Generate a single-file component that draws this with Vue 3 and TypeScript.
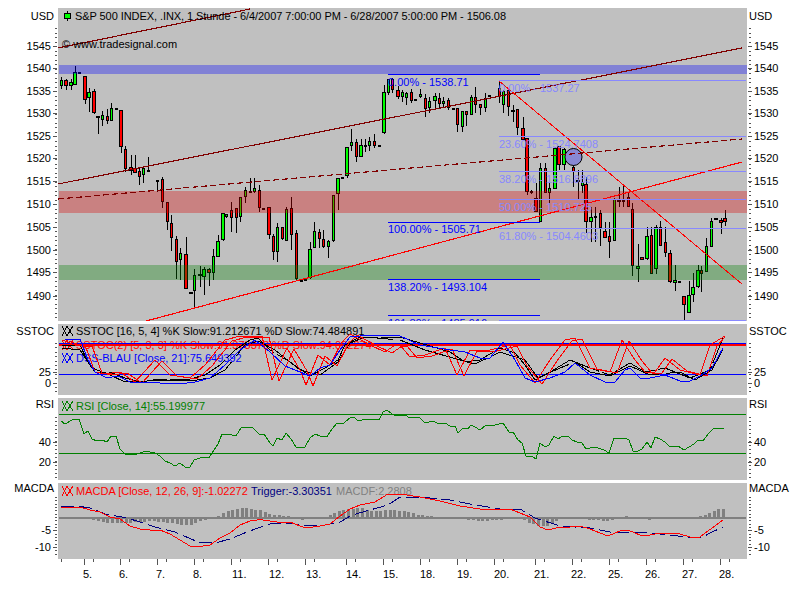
<script setup lang="ts">
// pixel data for the S&P chart, all values are y/x in page px
type Candle = [number, number, number, number, number, string];
type Pt = [number, number];

const candles: Candle[] = [
  [61, 77, 89, 80, 86, 'g'], [65.5, 79, 90, 80, 86, 'r'], [70.5, 79, 90, 82, 86, 'g'], [74.5, 66, 85, 72, 85, 'g'],
  [79, 72, 73, 72, 73, 'd'], [84.5, 76, 104, 76, 100, 'r'], [88.5, 88, 112, 92, 98, 'g'], [93.5, 89, 114, 91, 113, 'r'],
  [97.5, 116, 134, 116, 117, 'd'], [102, 111, 126, 115, 120, 'g'], [107, 109, 124, 116, 121, 'r'], [111, 103, 121, 108, 121, 'g'],
  [116, 108, 109, 108, 109, 'd'], [120.5, 110, 153, 110, 147, 'r'], [125, 146, 172, 149, 169, 'r'], [130.5, 155, 175, 167, 171, 'r'],
  [134.5, 155, 173, 168, 173, 'r'], [139, 168, 185, 171, 177, 'r'], [143, 168, 183, 168, 175, 'g'], [148, 157, 171, 170, 171, 'd'],
  [157, 180, 192, 180, 181, 'd'], [162, 177, 208, 179, 202, 'r'], [167, 202, 230, 202, 222, 'r'], [171, 215, 251, 223, 238, 'r'],
  [176, 236, 279, 239, 262, 'r'], [180, 248, 280, 253, 260, 'g'], [185.5, 237, 289, 254, 289, 'r'], [190.5, 292, 293, 292, 293, 'd'],
  [194, 269, 307, 275, 291, 'g'], [199.5, 266, 287, 274, 275, 'd'], [203.5, 267, 295, 269, 277, 'g'], [208.5, 268, 286, 269, 273, 'r'],
  [213, 249, 280, 256, 273, 'g'], [217.5, 235, 257, 241, 257, 'g'], [222.5, 213, 241, 213, 240, 'g'], [226, 214, 218, 214, 217, 'g'],
  [231, 202, 232, 210, 218, 'r'], [236, 208, 233, 208, 218, 'r'], [240, 197, 222, 197, 217, 'g'], [245, 187, 203, 190, 197, 'g'],
  [250, 178, 193, 191, 193, 'r'], [254, 178, 193, 188, 192, 'g'], [259, 185, 212, 190, 208, 'r'], [263, 208, 209, 208, 209, 'd'],
  [268.5, 207, 239, 207, 235, 'r'], [273, 234, 260, 236, 252, 'r'], [277, 223, 262, 227, 252, 'g'], [282, 227, 240, 227, 239, 'r'],
  [286, 207, 241, 209, 241, 'g'], [291, 197, 250, 208, 235, 'r'], [296, 230, 280, 233, 279, 'r'], [301, 280, 281, 280, 281, 'd'],
  [305, 279, 280, 279, 280, 'd'], [309.5, 242, 279, 249, 278, 'g'], [314, 222, 248, 231, 248, 'g'], [319, 229, 248, 232, 239, 'r'],
  [323, 230, 248, 239, 247, 'r'], [328, 240, 258, 241, 247, 'g'], [333, 195, 242, 195, 241, 'g'], [337.5, 178, 210, 178, 194, 'g'],
  [342, 177, 178, 177, 178, 'd'], [346.5, 147, 178, 147, 176, 'g'], [351, 129, 151, 142, 146, 'g'], [356, 139, 162, 142, 157, 'r'],
  [360.5, 139, 157, 145, 157, 'g'], [365, 139, 152, 145, 146, 'd'], [369, 137, 151, 141, 146, 'g'], [374, 134, 148, 141, 146, 'r'],
  [379, 145, 146, 145, 146, 'd'], [383.5, 85, 134, 92, 133, 'g'], [388, 79, 95, 79, 93, 'g'], [392, 78, 93, 79, 90, 'r'],
  [397.5, 86, 99, 90, 97, 'r'], [402, 90, 102, 92, 97, 'g'], [406, 92, 105, 93, 98, 'g'], [411, 89, 103, 92, 101, 'r'],
  [415, 99, 100, 99, 100, 'd'], [420, 89, 98, 94, 97, 'g'], [425, 94, 117, 98, 109, 'r'], [429, 97, 113, 101, 108, 'g'],
  [434.5, 93, 108, 96, 101, 'g'], [439, 93, 108, 98, 104, 'r'], [443, 97, 108, 101, 104, 'g'], [448, 98, 110, 100, 108, 'r'],
  [453, 108, 109, 108, 109, 'd'], [457, 108, 132, 108, 125, 'r'], [462, 111, 132, 111, 127, 'g'], [466, 111, 126, 111, 115, 'r'],
  [471, 95, 115, 97, 115, 'g'], [475, 87, 113, 97, 105, 'r'], [480, 104, 115, 104, 108, 'r'], [485, 93, 112, 98, 108, 'g'],
  [489, 95, 97, 95, 97, 'g'], [499, 81, 103, 88, 97, 'r'], [503, 90, 113, 91, 105, 'g'], [508, 90, 116, 90, 107, 'r'],
  [512.5, 105, 122, 110, 111, 'd'], [517, 109, 135, 109, 128, 'r'], [522.5, 117, 137, 128, 140, 'r'], [526.5, 138, 195, 138, 192, 'r'],
  [531, 190, 194, 191, 193, 'r'], [535.5, 183, 212, 198, 212, 'r'], [540, 163, 222, 168, 222, 'g'], [545, 163, 193, 168, 193, 'r'],
  [549, 182, 203, 188, 193, 'g'], [554.5, 147, 189, 148, 189, 'g'], [558.5, 146, 170, 146, 165, 'r'], [563.5, 148, 170, 149, 165, 'g'],
  [573, 160, 187, 167, 172, 'r'], [577.5, 170, 199, 180, 181, 'd'], [582, 170, 193, 182, 186, 'g'], [585.5, 177, 233, 184, 222, 'r'],
  [590.5, 207, 242, 217, 222, 'g'], [595, 207, 242, 216, 218, 'g'], [600, 210, 246, 213, 228, 'r'], [604.5, 222, 238, 231, 238, 'r'],
  [609, 222, 258, 236, 242, 'r'], [614, 198, 241, 199, 241, 'g'], [618.5, 187, 207, 200, 201, 'd'], [623, 185, 207, 200, 201, 'd'],
  [628, 192, 207, 197, 207, 'r'], [632, 203, 276, 209, 266, 'r'], [637.5, 244, 282, 266, 269, 'g'], [641.5, 257, 260, 257, 260, 'r'],
  [646.5, 227, 260, 236, 259, 'g'], [651, 227, 274, 235, 274, 'r'], [655.5, 225, 274, 227, 269, 'g'], [660, 221, 246, 227, 246, 'r'],
  [665, 227, 257, 242, 253, 'r'], [669.5, 250, 283, 253, 282, 'r'], [674.5, 265, 291, 280, 283, 'g'], [679, 281, 282, 281, 282, 'd'],
  [683.5, 296, 320, 296, 305, 'r'], [688.5, 281, 313, 295, 313, 'g'], [692.5, 273, 302, 287, 295, 'g'], [697.5, 265, 288, 270, 287, 'g'],
  [701, 266, 292, 270, 274, 'r'], [706, 238, 272, 246, 272, 'g'], [711, 218, 247, 221, 247, 'g'], [715.5, 218, 220, 218, 220, 'r'],
  [720.5, 218, 234, 220, 223, 'r'], [724.5, 210, 226, 218, 222, 'r'],
];

const candleFill = (c: string) => (c === 'g' ? '#00ff00' : c === 'r' ? '#ff0000' : '#000080');
// bars that fall between two pixel columns come out one px wider
const bodyWidth = (x: number) => (x % 1 ? 3 : 2);

const toPoints = (pts: Pt[]) => pts.map((p) => p.join(',')).join(' ');

// the second %K line trails the first one by a bit
const lag = (pts: Pt[], dx: number, dy: number): Pt[] => pts.map(([x, y]) => [Math.min(x + dx, 725), y + dy]);

const rsi: Pt[] = [
  [61, 421], [65, 424], [72, 420], [79, 419], [84, 434], [88, 431], [92, 439], [97, 441], [102, 440], [107, 442], [111, 436], [116, 436],
  [120, 449], [125, 454], [130, 454], [135, 454.5], [140, 453], [145, 451.5], [150, 452], [155, 453], [160, 456], [165, 461], [170, 463],
  [175, 466], [180, 463], [185, 467], [190, 467], [194, 460], [200, 458], [205, 457.5], [209, 458], [212, 453], [218, 444], [222, 434],
  [228, 434], [232, 435], [236, 436], [241, 428], [246, 427], [253, 428], [259, 434], [264, 434], [270, 443], [273, 446], [277, 438],
  [282, 440], [286, 433], [291, 439], [296, 447], [305, 447], [310, 438], [315, 434], [320, 436], [327, 436.5], [332, 429], [337, 423],
  [344, 423], [351, 417], [355, 418], [358, 421], [362, 420], [370, 419.5], [379, 420], [383, 412], [387, 410], [392, 414], [396, 416],
  [405, 415], [410, 418], [419, 417], [425, 423], [433, 421], [439, 424], [445, 423], [450, 426], [455, 426], [458, 433], [463, 428],
  [468, 429], [471, 425], [475, 427], [480, 430], [486, 425], [495, 425], [503, 423], [509, 432], [513, 432], [518, 440], [522, 443],
  [526, 456], [532, 456], [536, 459], [540, 443], [545, 447], [549, 445], [554, 436], [558, 439], [563, 436], [568, 436], [572, 440],
  [577, 442], [582, 443], [586, 449], [595, 447], [604, 450], [609, 453], [614, 438], [620, 439], [625, 438], [629, 440], [633, 451],
  [638, 451], [642, 449], [647, 442], [651, 448], [655, 437], [660, 439], [665, 442], [669, 446], [678, 446], [684, 450], [689, 447],
  [694, 444], [698, 440], [703, 441], [708, 434], [713, 429], [718, 428], [724, 429],
];

const macd: Pt[] = [
  [61, 507], [80, 507], [90, 510], [100, 512], [110, 517], [120, 519], [130, 526], [140, 529], [150, 530], [160, 530], [170, 534],
  [180, 540], [190, 546], [200, 546.5], [210, 545], [220, 538], [230, 533], [240, 525], [250, 521], [260, 519.5], [270, 521], [280, 522.5],
  [290, 522], [300, 526], [306, 528], [320, 526], [330, 524], [340, 516], [350, 509], [360, 505], [375, 502], [388, 494], [400, 494],
  [420, 497], [440, 501], [460, 506], [480, 509], [510, 509], [520, 513], [530, 517], [540, 527], [548, 530], [560, 527], [570, 527],
  [580, 526], [590, 529], [600, 533], [608, 536], [620, 531], [628, 530], [640, 535], [650, 535], [660, 533], [680, 534], [690, 537],
  [700, 537], [705, 533], [715, 526], [723, 520],
];

const trigger: Pt[] = [
  [61, 506], [77, 506], [90, 508], [105, 514], [127, 518], [140, 522], [155, 527], [175, 532], [198, 542], [215, 543], [230, 539],
  [247, 532], [258, 528], [270, 524], [290, 523], [300, 525], [320, 526], [340, 522], [352, 515], [370, 510], [388, 505], [400, 497],
  [420, 497], [450, 500], [470, 504], [500, 509], [520, 509], [535, 518], [560, 526], [575, 527], [590, 528], [610, 532], [640, 532],
  [670, 535], [686, 537], [703, 537], [710, 533], [723, 527],
];

// histogram outline, bars are sampled from it every 4.63px
const histKeys: Pt[] = [
  [61, -1], [85, -1], [95, -3], [107, -5.6], [123, -6], [140, -5], [150, -4], [170, -6], [180, -8], [190, -8], [200, -4], [213, -1],
  [220, 2], [227, 6], [245, 9], [263, 6], [272, 2], [290, 1], [300, -3], [310, -2], [320, -1], [327, 1], [337, 5], [347, 8], [360, 9],
  [373, 6], [390, 7], [405, 6], [418, 2], [430, 1], [450, -1], [460, -2], [480, -4], [500, -3], [520, -1], [523, -3], [530, -6],
  [540, -10], [550, -8], [560, -2], [580, -1], [590, -3], [610, -4], [620, -1], [625, 1], [640, -1], [650, -3], [660, -1], [670, -2],
  [690, -1], [700, 1], [708, 3], [712, 5], [717, 8], [725, 8],
];

const histAt = (x: number) => {
  for (let i = 1; i < histKeys.length; i++) {
    const [x0, v0] = histKeys[i - 1];
    const [x1, v1] = histKeys[i];
    if (x <= x1) return v0 + ((v1 - v0) * (x - x0)) / (x1 - x0);
  }
  return 0;
};

const histBars = Array.from({ length: 144 }, (_, i) => {
  const x = Math.round(61 + i * 4.63);
  const v = Math.round(histAt(x));
  return { x, y: v > 0 ? 517 - v : 517, h: Math.max(Math.abs(v), 1) };
});

const red1: Pt[] = [
  [62, 340], [75, 345], [85, 345], [95, 372], [105, 374], [120, 372], [135, 382], [155, 360], [170, 375], [190, 378], [205, 365], [225, 340],
  [240, 336], [262, 336], [272, 380], [287, 348], [300, 370], [306, 385], [318, 355], [330, 365], [342, 342], [350, 334], [370, 345],
  [385, 352], [395, 345], [400, 345], [410, 357], [425, 355], [445, 348], [457, 375], [470, 350], [490, 350], [510, 345], [520, 365],
  [535, 383], [550, 360], [565, 340], [575, 338], [590, 368], [610, 372], [622, 340], [635, 360], [645, 372], [655, 372], [665, 358],
  [680, 370], [700, 375], [710, 345], [725, 336],
];

const black1: Pt[] = [
  [62, 345], [80, 345], [88, 362], [95, 372], [110, 372], [125, 378], [140, 382], [160, 379], [190, 379], [205, 375], [220, 365], [235, 350],
  [250, 340], [258, 338], [270, 350], [290, 362], [310, 376], [325, 368], [338, 360], [345, 345], [360, 337], [400, 337], [420, 343],
  [450, 352], [465, 362], [480, 360], [500, 348], [515, 353], [525, 365], [535, 380], [550, 372], [570, 360], [590, 368], [610, 375],
  [630, 363], [645, 372], [665, 368], [690, 378], [710, 370], [723, 338],
];

const black2: Pt[] = [
  [62, 348], [80, 350], [92, 368], [110, 375], [125, 382], [145, 380], [190, 381], [210, 378], [225, 370], [245, 345], [258, 341], [275, 350],
  [300, 370], [320, 375], [338, 362], [350, 343], [365, 337], [400, 340], [425, 350], [460, 360], [475, 364], [500, 352], [525, 360],
  [538, 378], [560, 368], [575, 362], [590, 372], [610, 376], [630, 366], [650, 375], [680, 372], [695, 380], [712, 370], [723, 349],
];

const blue1: Pt[] = [
  [65, 340], [80, 339], [88, 360], [95, 372], [107, 378], [118, 376], [130, 382], [140, 382], [160, 383], [180, 384], [195, 382], [210, 378],
  [225, 365], [240, 350], [255, 340], [270, 352], [285, 366], [300, 372], [310, 376], [320, 368], [330, 365], [340, 350], [350, 337],
  [370, 335], [400, 336], [420, 345], [450, 350], [465, 352], [480, 358], [490, 358], [503, 342], [515, 360], [525, 378], [535, 382],
  [550, 378], [565, 372], [575, 363], [590, 375], [605, 382], [615, 382], [625, 370], [630, 368], [640, 378], [650, 378], [665, 375],
  [680, 381], [690, 381], [700, 376], [712, 368], [723, 348],
];

const panes = [
  { y: 8, h: 313 },
  { y: 324, h: 71 },
  { y: 398, h: 82 },
  { y: 483, h: 76 },
];

const axisLabels = [
  { t: '1545', y: 46 }, { t: '1540', y: 68 }, { t: '1535', y: 91 }, { t: '1530', y: 113 }, { t: '1525', y: 136 }, { t: '1520', y: 158 },
  { t: '1515', y: 181 }, { t: '1510', y: 204 }, { t: '1505', y: 227 }, { t: '1500', y: 250 }, { t: '1495', y: 272 }, { t: '1490', y: 296 },
  { t: '25', y: 372 }, { t: '0', y: 383 }, { t: '40', y: 442 }, { t: '20', y: 462 }, { t: '-5', y: 530 }, { t: '-10', y: 547 },
];

const paneNames = [
  { t: 'USD', y: 20 }, { t: 'SSTOC', y: 335 }, { t: 'RSI', y: 408 }, { t: 'MACDA', y: 492 },
];

const minorTicks: number[] = [];
const addTicks = (from: number, to: number, step: number) => {
  for (let y = from; y <= to; y += step) minorTicks.push(Math.round(y));
};
addTicks(28, 318, 4.52);
addTicks(343, 394, 4.4);
addTicks(417, 478, 4);
addTicks(497, 557, 3.34);

const days = [
  { t: '5.', tick: 84, x: 83 }, { t: '6.', tick: 120, x: 119 }, { t: '7.', tick: 157, x: 156 }, { t: '8.', tick: 194, x: 193 },
  { t: '11.', tick: 231, x: 232 }, { t: '12.', tick: 268, x: 269 }, { t: '13.', tick: 305, x: 306 }, { t: '14.', tick: 346, x: 346 },
  { t: '15.', tick: 383, x: 383 }, { t: '18.', tick: 420, x: 420 }, { t: '19.', tick: 457, x: 457 }, { t: '20.', tick: 494, x: 494 },
  { t: '21.', tick: 535, x: 534 }, { t: '22.', tick: 572, x: 571 }, { t: '25.', tick: 609, x: 608 }, { t: '26.', tick: 646, x: 645 },
  { t: '27.', tick: 683, x: 682 }, { t: '28.', tick: 720, x: 719 },
];

const fibDark = [
  { y: 74, t: '0.00% - 1538.71', by: 86 },
  { y: 222, t: '100.00% - 1505.71', by: 233 },
  { y: 279, t: '138.20% - 1493.104', by: 291 },
  { y: 315, t: '161.80% - 1485.916', by: 327 },
];

const fibLight = [
  { y: 80, t: '0.00% - 1537.27', by: 92 },
  { y: 136, t: '23.60% - 1524.7408', by: 148 },
  { y: 171, t: '38.20% - 1516.8896', by: 183 },
  { y: 199, t: '50.00% - 1510.725', by: 211 },
  { y: 228, t: '61.80% - 1504.4603', by: 240 },
  { y: 320, t: '', by: 0 },
];

const legends = [
  { t: 'SSTOC [16, 5, 4] %K Slow:91.212671 %D Slow:74.484891', x: 76, y: 335, fill: '#000000' },
  { t: 'SSTOC(2) [5, 3, 3] %K Slow:91.373373 %D Slow:94.062274', x: 76, y: 349, fill: '#ff0000' },
  { t: 'DSS-BLAU [Close, 21]:75.649392', x: 76, y: 362, fill: '#0000ff' },
  { t: 'RSI [Close, 14]:55.199977', x: 76, y: 410, fill: '#008000' },
  { t: 'MACDA [Close, 12, 26, 9]:-1.02272', x: 76, y: 495, fill: '#ff0000' },
  { t: 'Trigger:-3.30351', x: 251, y: 495, fill: '#000080' },
  { t: 'MACDF:2.2808', x: 336, y: 495, fill: '#808080' },
];

// little crossed-lines symbol in front of each indicator name
const markerIcon = (y: number) => {
  const t = y - 9;
  const b = y + 1;
  return `M62 ${t}L67 ${b}M67 ${t}L62 ${b}M67 ${t}L73 ${b}M73 ${t}L67 ${b}`;
};

const markers = [
  { y: 335, stroke: '#000000' }, { y: 349, stroke: '#ff0000' }, { y: 362, stroke: '#0000ff' }, { y: 410, stroke: '#008000' }, { y: 495, stroke: '#ff0000' },
];
</script>

<template>
  <svg class="chart" width="805" height="591" viewBox="0 0 805 591">
    <defs>
      <clipPath id="main-pane"><rect x="58" y="8" width="689" height="313" /></clipPath>
    </defs>

    <rect v-for="p in panes" :key="p.y" class="pane" x="58" :y="p.y" width="689" :height="p.h" />

    <!-- axes -->
    <g class="ticks">
      <template v-for="y in minorTicks" :key="y">
        <line x1="55" x2="57" :y1="y + 0.5" :y2="y + 0.5" />
        <line x1="749" x2="751" :y1="y + 0.5" :y2="y + 0.5" />
      </template>
      <template v-for="a in axisLabels" :key="a.t">
        <line x1="53" x2="57" :y1="a.y + 0.5" :y2="a.y + 0.5" />
        <line x1="748" x2="752" :y1="a.y + 0.5" :y2="a.y + 0.5" />
      </template>
      <template v-for="d in days" :key="d.t">
        <line :x1="d.tick + 0.5" :x2="d.tick + 0.5" y1="559" y2="565" />
        <line :x1="d.tick + 9.5" :x2="d.tick + 9.5" y1="559" y2="562" />
      </template>
      <line x1="61.5" x2="61.5" y1="559" y2="562" />
    </g>
    <g class="txt">
      <template v-for="a in axisLabels" :key="a.t">
        <text x="51" :y="a.y + 4" text-anchor="end">{{ a.t }}</text>
        <text x="754" :y="a.y + 4">{{ a.t }}</text>
      </template>
      <template v-for="n in paneNames" :key="n.t">
        <text x="54" :y="n.y" text-anchor="end">{{ n.t }}</text>
        <text x="749" :y="n.y">{{ n.t }}</text>
      </template>
      <text v-for="d in days" :key="d.t" :x="d.x" y="578">{{ d.t }}</text>
    </g>

    <!-- candles -->
    <g v-for="c in candles" :key="c[0]">
      <line class="wick" :x1="Math.round(c[0]) + 0.5" :x2="Math.round(c[0]) + 0.5" :y1="c[1]" :y2="c[2]" />
      <rect
        class="body"
        :x="Math.round(c[0]) - 0.5 - (bodyWidth(c[0]) - 2)"
        :y="c[3] + 0.5"
        :width="bodyWidth(c[0])"
        :height="Math.max(c[4] - c[3] - 1, 0.5)"
        :fill="candleFill(c[5])"
      />
    </g>

    <!-- support / resistance zones lie over the candles -->
    <rect class="zone" x="59" y="65" width="688" height="9" fill="rgba(0,0,255,0.33)" />
    <rect class="zone" x="59" y="191" width="688" height="22" fill="rgba(220,0,0,0.33)" />
    <rect class="zone" x="59" y="265" width="688" height="15" fill="rgba(0,128,0,0.33)" />

    <circle class="marker" cx="573.5" cy="157" r="8.5" />

    <!-- trend lines -->
    <line class="dark-line" x1="58" y1="48" x2="250" y2="9" />
    <line class="dark-line" x1="58" y1="184" x2="742" y2="48" />
    <line class="dark-line dashed" x1="58" y1="199" x2="742" y2="139" />
    <line class="red-line" x1="146" y1="321" x2="742" y2="162" />
    <line class="red-line thin" x1="499" y1="81" x2="742" y2="284" />

    <!-- fibonacci -->
    <g clip-path="url(#main-pane)">
      <template v-for="f in fibDark" :key="f.y">
        <line class="fib-dark" x1="388" x2="540" :y1="f.y + 0.5" :y2="f.y + 0.5" />
        <text class="label" x="388" :y="f.by" fill="#0000ff">{{ f.t }}</text>
      </template>
      <template v-for="f in fibLight" :key="f.y">
        <line class="fib-light" x1="499" x2="746" :y1="f.y + 0.5" :y2="f.y + 0.5" />
        <text class="label" x="499" :y="f.by" fill="#8888ff">{{ f.t }}</text>
      </template>
    </g>

    <!-- headers -->
    <line class="wick" x1="67.5" x2="67.5" y1="11" y2="21" />
    <rect class="body" x="64.5" y="13.5" width="6" height="5" fill="#00ff00" />
    <text class="label" x="75" y="20" fill="#000000" textLength="431">S&amp;P 500 INDEX, .INX, 1 Stunde - 6/4/2007 7:00:00 PM - 6/28/2007 5:00:00 PM - 1506.08</text>
    <text class="label" x="62" y="48" fill="#000000">© www.tradesignal.com</text>

    <!-- legends sit under the curves -->
    <path v-for="m in markers" :key="m.y" class="xx" :d="markerIcon(m.y)" :stroke="m.stroke" />
    <text v-for="l in legends" :key="l.t" class="label" :x="l.x" :y="l.y" :fill="l.fill">{{ l.t }}</text>

    <!-- SSTOC -->
    <line class="lvl-red" x1="59" x2="746" y1="345" y2="345" />
    <line class="lvl-blue" x1="59" x2="746" y1="343.5" y2="343.5" />
    <line class="lvl-blue" x1="59" x2="746" y1="374.5" y2="374.5" />
    <polyline class="curve" stroke="#000000" stroke-dasharray="60 3" :points="toPoints(black1)" />
    <polyline class="curve" stroke="#000000" stroke-dasharray="90 8" :points="toPoints(black2)" />
    <polyline class="curve" stroke="#ff0000" :points="toPoints(red1)" />
    <polyline class="curve" stroke="#ff0000" :points="toPoints(lag(red1, 7, 1))" />
    <polyline class="curve" stroke="#0000ff" :points="toPoints(blue1)" />

    <!-- RSI -->
    <line class="lvl-green" x1="59" x2="746" y1="414.5" y2="414.5" />
    <line class="lvl-green" x1="59" x2="746" y1="453.5" y2="453.5" />
    <polyline class="curve" stroke="#008000" :points="toPoints(rsi)" />

    <!-- MACD -->
    <rect
      v-for="b in histBars"
      :key="b.x"
      class="hist"
      :x="b.x - 1"
      :y="b.y"
      width="3"
      :height="b.h"
    />
    <line class="zero" x1="59" x2="746" y1="518" y2="518" />
    <polyline class="curve" stroke="#000080" stroke-dasharray="13 5" :points="toPoints(trigger)" />
    <polyline class="curve" stroke="#ff0000" :points="toPoints(macd)" />
  </svg>
</template>

<style scoped>
.chart {
  display: block;
  background: #ffffff;
}

.chart text {
  font-family: "Liberation Sans", Arial, sans-serif;
  font-size: 11px;
}

.txt {
  fill: #000000;
}

.xx {
  fill: none;
  stroke-width: 1;
  shape-rendering: crispEdges;
}

.pane {
  fill: #c0c0c0;
}

.ticks line {
  stroke: #555555;
  stroke-width: 1;
  shape-rendering: crispEdges;
}

.wick {
  stroke: #000000;
  stroke-width: 1;
  shape-rendering: crispEdges;
}

.body {
  stroke: #000000;
  stroke-width: 1;
  shape-rendering: crispEdges;
}

.zone {
  shape-rendering: crispEdges;
}

.dark-line {
  stroke: #800000;
  stroke-width: 1.15;
  shape-rendering: crispEdges;
}

.dashed {
  stroke-dasharray: 6 3;
}

.red-line {
  stroke: #ff0000;
  stroke-width: 1.15;
  shape-rendering: crispEdges;
}

.thin {
  stroke-width: 1;
}

.fib-dark {
  stroke: #0000ff;
  shape-rendering: crispEdges;
}

.fib-light {
  stroke: #8888ff;
  shape-rendering: crispEdges;
}

.marker {
  fill: #8888d4;
  stroke: #000000;
  stroke-width: 1;
}

.lvl-red {
  stroke: #ff0000;
  stroke-width: 2;
  shape-rendering: crispEdges;
}

.lvl-blue {
  stroke: #0000ff;
  stroke-width: 1;
  shape-rendering: crispEdges;
}

.lvl-green {
  stroke: #008000;
  stroke-width: 1;
  shape-rendering: crispEdges;
}

.curve {
  fill: none;
  stroke-width: 1;
  shape-rendering: crispEdges;
}

.hist {
  fill: #808080;
  shape-rendering: crispEdges;
}

.zero {
  stroke: #808080;
  stroke-width: 2;
  shape-rendering: crispEdges;
}
</style>
